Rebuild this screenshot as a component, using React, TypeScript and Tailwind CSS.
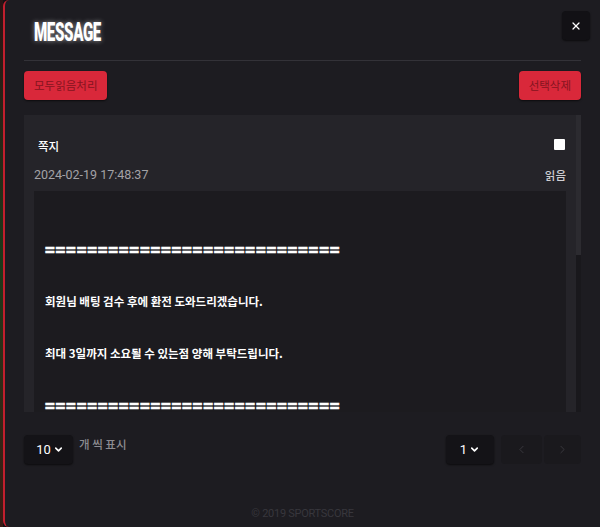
import React from "react";
import { ChevronDown, ChevronLeft, ChevronRight, X } from "lucide-react";

const EQ = "============================";

export default function App() {
  return (
    <div className="w-[600px] h-[527px] flex bg-[#121114] overflow-hidden" style={{ fontFamily: '"Noto Sans CJK KR", "Noto Sans", sans-serif' }}>
      <div className="w-[3px] h-full bg-gradient-to-b from-[#2a1414] via-[#1a3a1a] to-[#3a1a14]" />
      <div className="flex-1 h-full flex flex-col bg-[#1d1c21] border-l-2 border-[#c21f2e] rounded-l-[6px] pl-[19px] pr-[19px]">
        {/* header */}
        <div className="flex items-start justify-between pt-[11px] h-[60px]">
          <div className="pl-[10px] pt-[10px]">
            <span
              className="inline-block origin-left scale-x-[0.63] scale-y-[1.05] text-white text-[24px] leading-[24px] font-black tracking-tight [text-shadow:0_0_6px_rgba(255,255,255,0.55)]"
              style={{ fontFamily: 'Roboto, "Liberation Sans", sans-serif' }}
            >
              MESSAGE
            </span>
          </div>
          <button className="-mr-[9px] w-[28px] h-[29px] rounded-[4px] bg-[#121115] flex items-center justify-center shadow-[0_1px_2px_rgba(0,0,0,0.6)]">
            <X size={12} strokeWidth={2.5} className="text-white" />
          </button>
        </div>
        <div className="h-px bg-[#333238]" />
        {/* buttons */}
        <div className="flex justify-between mt-[10px]">
          <button className="h-[29px] px-[10px] rounded-[4px] bg-[#d9283a] text-[#86141f] text-[11.5px] shadow-[0_1px_2px_rgba(0,0,0,0.6)]">
            모두읽음처리
          </button>
          <button className="h-[29px] px-[10px] rounded-[4px] bg-[#d9283a] text-[#86141f] text-[11.5px] shadow-[0_1px_2px_rgba(0,0,0,0.6)]">
            선택삭제
          </button>
        </div>
        {/* panel */}
        <div className="mt-[15px] flex h-[297px]">
          <div className="flex-1 bg-[#252429] flex flex-col overflow-hidden">
            <div className="flex items-start justify-between pl-[14px] pr-[11px] h-[46px]">
              <span className="mt-[23px] leading-[17px] text-white text-[11.5px] font-medium">쪽지</span>
              <span className="mt-[24px] w-[11px] h-[11px] bg-white rounded-[1px]" />
            </div>
            <div className="flex items-center justify-between pl-[10px] pr-[10px] h-[27px] pt-[2px]">
              <span className="text-[#a3a2a6] text-[12.5px]" style={{ fontFamily: 'Roboto, "Liberation Sans", sans-serif' }}>
                2024-02-19 17:48:37
              </span>
              <span className="text-[#d0cfd3] text-[11.5px] font-medium">읽음</span>
            </div>
            <div className="mx-[10px] mt-[3px] flex-1 bg-[#1c1b1f] pl-[11px] pt-[19px] overflow-hidden text-white text-[11.5px] font-bold leading-[26px]">
              <div>&nbsp;</div>
              <div className="text-[16px] font-black tracking-[0.8px] whitespace-nowrap [-webkit-text-stroke:0.6px_white]">{EQ}</div>
              <div>&nbsp;</div>
              <div>회원님 배팅 검수 후에 환전 도와드리겠습니다.</div>
              <div>&nbsp;</div>
              <div>최대 3일까지 소요될 수 있는점 양해 부탁드립니다.</div>
              <div>&nbsp;</div>
              <div className="text-[16px] font-black tracking-[0.8px] whitespace-nowrap [-webkit-text-stroke:0.6px_white]">{EQ}</div>
            </div>
          </div>
          <div className="w-[5px] flex flex-col bg-[#19181c]">
            <div className="h-[140px] bg-[#2c2b30]" />
          </div>
        </div>
        {/* bottom controls */}
        <div className="flex justify-between items-start mt-[23px]">
          <div className="flex items-start gap-[6px]">
            <div className="w-[49px] h-[29px] rounded-[4px] bg-[#141317] shadow-[0_1px_2px_rgba(0,0,0,0.6)] flex items-center justify-center gap-[2px] pl-[3px]">
              <span className="text-white text-[13px]" style={{ fontFamily: 'Roboto, "Liberation Sans", sans-serif' }}>10</span>
              <ChevronDown size={11} strokeWidth={3.5} className="text-white" />
            </div>
            <span className="text-[#8d8c91] text-[11.5px] font-medium pt-[1px]">개 씩 표시</span>
          </div>
          <div className="flex gap-[7px]">
            <div className="w-[48px] h-[29px] rounded-[4px] bg-[#141317] shadow-[0_1px_2px_rgba(0,0,0,0.6)] flex items-center justify-center gap-[2px]">
              <span className="text-white text-[13px]" style={{ fontFamily: 'Roboto, "Liberation Sans", sans-serif' }}>1</span>
              <ChevronDown size={11} strokeWidth={3.5} className="text-white" />
            </div>
            <div className="flex gap-[2px]">
              <div className="w-[41px] h-[29px] rounded-[4px] bg-[#1a191d] flex items-center justify-center">
                <ChevronLeft size={13} strokeWidth={1.5} className="text-[#3f3e44]" />
              </div>
              <div className="w-[37px] h-[29px] rounded-[4px] bg-[#1a191d] flex items-center justify-center">
                <ChevronRight size={13} strokeWidth={1.5} className="text-[#3f3e44]" />
              </div>
            </div>
          </div>
        </div>
        <div className="flex-1 flex items-end justify-center pb-[5px]">
          <span className="text-[#38373d] text-[11px] tracking-tight" style={{ fontFamily: 'Roboto, "Liberation Sans", sans-serif' }}>
            © 2019 SPORTSCORE
          </span>
        </div>
      </div>
    </div>
  );
}
